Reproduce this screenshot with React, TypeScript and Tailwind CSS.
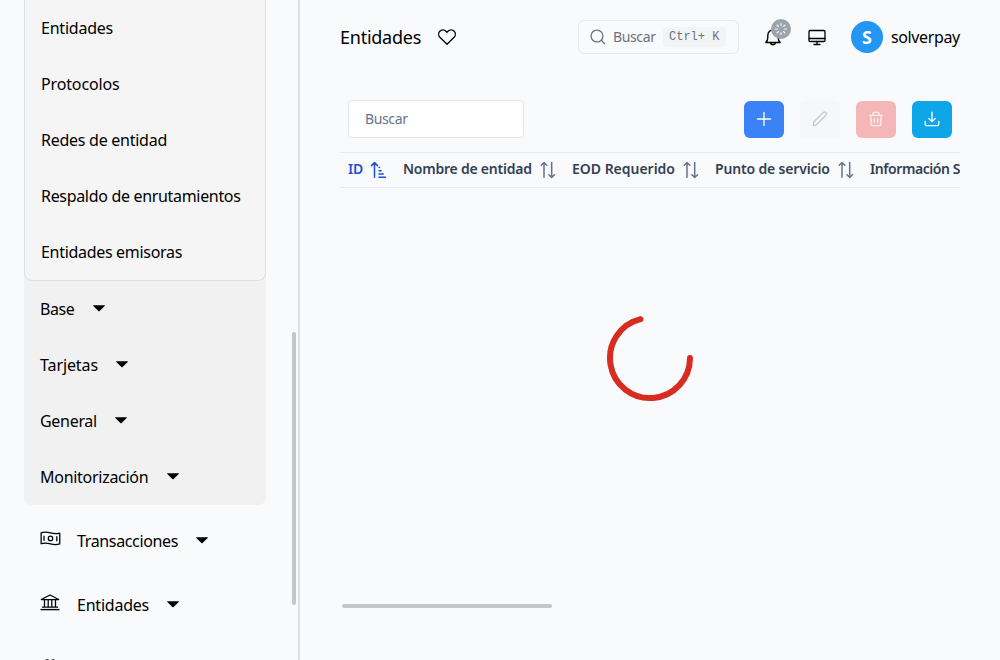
import type { ReactNode } from "react";

const subEntries = [
  { label: "Entidades", tracking: "tracking-[-0.22px]" },
  { label: "Protocolos", tracking: "tracking-[-0.14px]" },
  { label: "Redes de entidad", tracking: "tracking-[-0.26px]" },
  { label: "Respaldo de enrutamientos", tracking: "tracking-[-0.32px]" },
  { label: "Entidades emisoras", tracking: "tracking-[-0.31px]" },
];

const groups = [
  { label: "Base", tracking: "tracking-[-0.4px]", width: "w-[34px]" },
  { label: "Tarjetas", tracking: "tracking-[-0.1px]", width: "w-[57px]" },
  { label: "General", tracking: "tracking-[-0.3px]", width: "w-[56px]" },
  { label: "Monitorización", tracking: "tracking-[-0.28px]", width: "w-[108px]" },
];

const columns = [
  { label: "Nombre de entidad", tracking: "tracking-[-0.23px]", width: "w-[169px]", sortable: true },
  { label: "EOD Requerido", tracking: "tracking-[-0.02px]", width: "w-[143px]", sortable: true },
  { label: "Punto de servicio", tracking: "tracking-[-0.16px]", width: "w-[155px]", sortable: true },
  { label: "Información S", tracking: "tracking-[-0.42px]", width: "w-[90px]", sortable: false },
];

function Caret() {
  return (
    <svg width="12" height="7" viewBox="0 0 12 7" className="mb-px shrink-0">
      <path d="M.6.3h10.8c.5 0 .6.5.3.8L6.6 6.1a.9.9 0 0 1-1.2 0L.3 1.1C0 .8.1.3.6.3z" fill="#000" />
    </svg>
  );
}

function SortIcon() {
  return (
    <svg width="16" height="18" viewBox="0 0 16 18" fill="none" stroke="#64748b" strokeWidth="1.5" strokeLinecap="round" strokeLinejoin="round" className="shrink-0">
      <path d="M4 16.300V1.500M1.200 4.300 4 1.500l2.800 2.800M11.700 1.500v15M8.900 13.700l2.800 2.800 2.800-2.800" />
    </svg>
  );
}

function SortAscIcon() {
  return (
    <svg width="17" height="18" viewBox="0 0 17 18" fill="none" stroke="#1d4ed8" strokeWidth="1.5" strokeLinecap="round" strokeLinejoin="round" className="shrink-0">
      <path d="M4.500 16.300V1.600M1.500 4.600l3-3 3 3M9 6.500h.5M9 9.700h2.200M9 13h4.200M9 16.300h6.500" />
    </svg>
  );
}

function MoneyIcon() {
  return (
    <svg width="21" height="15" viewBox="0 0 22 15" fill="none" stroke="#000" strokeWidth="1.35" strokeLinejoin="round">
      <path d="M1.200 1.600c3.300-1.100 6.500-.8 9.800.1 3.200.9 6.400 1.100 9.700.2v11.300c-3.300 1-6.500.8-9.700 0-3.300-.9-6.500-1.200-9.800-.2z" />
      <circle cx="11" cy="7.400" r="2.300" />
      <path d="M4.200 4.500v5.300M17.600 5.200v5.300" />
    </svg>
  );
}

function BankIcon() {
  return (
    <svg width="20" height="17" viewBox="0 0 20 17" fill="none" stroke="#000" strokeWidth="1.25" strokeLinejoin="round">
      <path d="M1.300 5.500 10 1l8.700 4.500zM4.500 5.500v7M8.200 5.500v7M11.800 5.500v7M15.500 5.500v7M2 13h16" />
      <path d="M.5 15.600h19" strokeWidth="1.4" />
    </svg>
  );
}

function PeopleIcon() {
  return (
    <svg width="20" height="17" viewBox="0 0 20 17" fill="none" stroke="#000" strokeWidth="1.3">
      <circle cx="7" cy="3.500" r="2.500" />
      <circle cx="13" cy="3.500" r="2.500" />
      <path d="M1.500 15a5.500 5.500 0 0 1 9 0M10 10a5.500 5.500 0 0 1 8.500 5" />
    </svg>
  );
}

function ActionButton({ className, children }: { className: string; children: ReactNode }) {
  return (
    <button className={`flex h-[37px] w-10 items-center justify-center rounded-md ${className}`}>
      <svg width="16" height="16" viewBox="0 0 16 16" fill="none" stroke="currentColor" strokeWidth="1.3" strokeLinecap="round" strokeLinejoin="round">
        {children}
      </svg>
    </button>
  );
}

function Sidebar() {
  return (
    <aside className="relative h-full w-[300px] shrink-0 overflow-hidden border-r-2 border-[#dedfe1] pl-6">
      <div className="w-[242px] overflow-hidden rounded-b-lg bg-[#f1f1f1]">
        <div className="h-[281px] rounded-b-lg border border-t-0 border-[#dfdfdf] bg-[#f5f5f5]">
          {subEntries.map((e) => (
            <div key={e.label} className={`flex h-14 items-center pl-4 whitespace-nowrap ${e.tracking}`}>{e.label}</div>
          ))}
        </div>
        {groups.map((g) => (
          <div key={g.label} className="flex h-14 items-center gap-[19px] pl-4 whitespace-nowrap">
            <span className={`${g.tracking} ${g.width}`}>{g.label}</span>
            <Caret />
          </div>
        ))}
      </div>
      <div className="pt-1">
        <div className="flex h-16 items-center pl-4">
          <span className="mb-1.5 w-[37px]"><MoneyIcon /></span>
          <span className="w-[119px] tracking-[-0.35px]">Transacciones</span>
          <Caret />
        </div>
        <div className="flex h-16 items-center pl-4">
          <span className="mb-1.5 w-[37px]"><BankIcon /></span>
          <span className="w-[90px] tracking-[-0.22px]">Entidades</span>
          <Caret />
        </div>
        <div className="flex h-16 items-start pt-[22px] pl-4"><PeopleIcon /></div>
      </div>
      <div className="absolute top-[332px] left-[292px] h-[273px] w-1 rounded-full bg-[#c5c6c7]" />
    </aside>
  );
}

function TopBar() {
  return (
    <header className="flex h-[74px] items-center">
      <h1 className="w-[98px] text-lg tracking-[-0.25px]">Entidades</h1>
      <svg width="18" height="16" viewBox="0 0 18 16" fill="none" stroke="#000" strokeWidth="1.3" strokeLinejoin="round">
        <path d="M9 15.200 1.900 8.300C.3 6.600.2 3.900 1.800 2.200c1.700-1.800 4.500-1.800 6.200 0l1 1 1-1c1.700-1.800 4.500-1.800 6.200 0 1.600 1.700 1.500 4.400-.1 6.100z" />
      </svg>
      <div className="ml-auto flex items-center">
        <div className="flex h-[34px] w-[161px] items-center rounded-md border border-[#e5e7eb] pl-[11px] text-sm text-[#6b7280]">
          <svg width="16" height="16" viewBox="0 0 16 16" fill="none" stroke="currentColor" strokeWidth="1.3" strokeLinecap="round">
            <circle cx="7" cy="7" r="5.900" />
            <path d="m11.300 11.300 3.400 3.400" />
          </svg>
          <span className="ml-[7px] w-[50px] tracking-[-0.38px]">Buscar</span>
          <kbd className="flex h-5 w-[63px] items-center rounded bg-[#f3f4f6] pl-1.5 font-['Liberation_Mono',monospace] text-xs whitespace-nowrap">Ctrl+ K</kbd>
        </div>
        <div className="relative ml-[26px] h-[18px] w-4">
          <svg width="16" height="18" viewBox="0 0 16 18" fill="none" stroke="#000" strokeWidth="1.4" strokeLinejoin="round">
            <path d="M.8 14.500h14.400c-1.400-1.200-2-2.900-2-5V7.500C13.200 4.300 11 2 8 2S2.800 4.300 2.800 7.500v2c0 2.100-.7 3.800-2 5zM5.500 14.600a2.500 2.100 0 0 0 5 0" />
          </svg>
          <span className="absolute -top-[9px] left-1.5 flex size-5 items-center justify-center rounded-full bg-[#9ca3af]">
            <svg width="14" height="14" viewBox="0 0 14 14" stroke="#f3f4f6" strokeWidth="1.1" strokeLinecap="round">
              <path d="M7 1.300v2.200M7 10.500v2.200M1.300 7h2.200M10.500 7h2.200M3 3l1.500 1.500M9.500 9.500 11 11M3 11l1.500-1.500M9.500 4.500 11 3" />
            </svg>
          </span>
        </div>
        <svg className="ml-[27px]" width="18" height="17" viewBox="0 0 18 17" fill="none" stroke="#000" strokeWidth="1.3" strokeLinejoin="round" strokeLinecap="round">
          <rect x="1" y="1.500" width="16" height="11" rx="1" />
          <path d="M1 9.500h16M9 12.500v3M6 15.500h6" />
        </svg>
        <div className="ml-[25px] flex size-8 items-center justify-center rounded-full bg-[#2196f3] text-lg font-bold text-white">S</div>
        <span className="ml-2 w-[69px] tracking-[-0.38px] whitespace-nowrap">solverpay</span>
      </div>
    </header>
  );
}

function Toolbar() {
  return (
    <div className="mt-[26px] flex h-[38px] items-center px-2">
      <input placeholder="Buscar" className="h-[38px] w-44 rounded border border-[#e2e6eb] bg-white px-4 pb-0.5 text-sm tracking-[-0.38px] outline-none placeholder:text-[#64748b]" />
      <div className="ml-auto flex gap-4">
        <ActionButton className="bg-[#3b82f6] text-white"><path d="M8 1.500v13M1.500 8h13" /></ActionButton>
        <ActionButton className="bg-[#f5f7f9] text-[#c3c9d1]">
          <path d="M1.400 14.600 1.600 11 11.200 1.600c.8-.8 1.900-.8 2.700 0 .7.700.7 1.800 0 2.600L4.500 13.800z" />
        </ActionButton>
        <ActionButton className="bg-[#f4b6b7] text-[#fdf0f0]">
          <path d="M1.500 4.300h13M5 4.300V2.500c0-.7.500-1.200 1.200-1.200h3.600c.7 0 1.200.500 1.200 1.200v1.800M3 4.300v9c0 .8.600 1.400 1.400 1.400h7.200c.8 0 1.400-.6 1.400-1.400v-9M6.300 7.500v4M9.700 7.500v4" />
        </ActionButton>
        <ActionButton className="bg-[#0ea5e9] text-white">
          <path d="M8 1.200v9.300M4.800 7.500 8 10.600l3.200-3.100M1.200 10.500v2.300c0 1.100.8 1.900 1.900 1.900h9.800c1.100 0 1.900-.8 1.900-1.900v-2.300" />
        </ActionButton>
      </div>
    </div>
  );
}

export default function App() {
  return (
    <div className="flex h-[660px] w-full overflow-hidden bg-[#f9fafc] font-['Noto_Sans',sans-serif] text-base text-black">
      <Sidebar />
      <main className="flex min-w-0 flex-1 flex-col px-10">
        <TopBar />
        <Toolbar />
        <div className="mt-3.5 flex h-9 shrink-0 items-center overflow-hidden border-y border-[#e2e8f0] pl-2 text-sm font-semibold whitespace-nowrap text-[#334155]">
          <div className="flex w-[55px] shrink-0 items-center gap-[7px] text-[#1d4ed8]">
            <span className="mb-0.5 w-[15px] tracking-[-0.3px]">ID</span>
            <SortAscIcon />
          </div>
          {columns.map((c) => (
            <div key={c.label} className={`flex shrink-0 items-center gap-2 ${c.width}`}>
              <span className={`mb-0.5 ${c.tracking}`}>{c.label}</span>
              {c.sortable && <SortIcon />}
            </div>
          ))}
        </div>
        <div className="flex h-[340px] items-center justify-center">
          <svg width="88" height="88" viewBox="0 0 88 88" fill="none" stroke="#d62d20" strokeWidth="6" strokeLinecap="round">
            <path d="M84 44A40 40 0 1 1 34.500 5.200" />
          </svg>
        </div>
        <div className="mt-[76px] ml-0.5 h-1 w-[210px] shrink-0 rounded-full bg-[#c5c6c7]" />
      </main>
    </div>
  );
}
